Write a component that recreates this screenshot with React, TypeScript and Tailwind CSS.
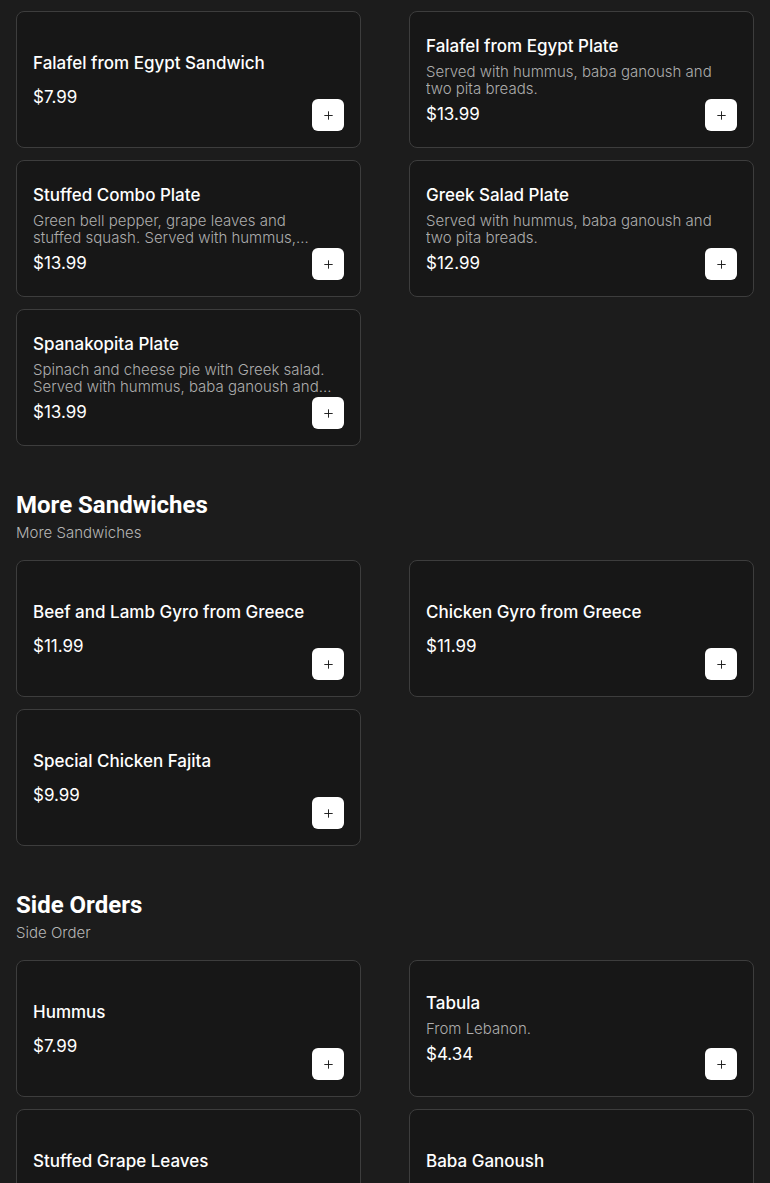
import { Plus } from 'lucide-react';

type Item = { name: string; desc?: string; price: string };

const sections: { title?: string; subtitle?: string; items: Item[] }[] = [
  {
    items: [
      { name: 'Falafel from Egypt Sandwich', price: '$7.99' },
      {
        name: 'Falafel from Egypt Plate',
        desc: 'Served with hummus, baba ganoush and two pita breads.',
        price: '$13.99',
      },
      {
        name: 'Stuffed Combo Plate',
        desc: 'Green bell pepper, grape leaves and stuffed squash. Served with hummus, baba ganoush and two pita breads.',
        price: '$13.99',
      },
      {
        name: 'Greek Salad Plate',
        desc: 'Served with hummus, baba ganoush and two pita breads.',
        price: '$12.99',
      },
      {
        name: 'Spanakopita Plate',
        desc: 'Spinach and cheese pie with Greek salad. Served with hummus, baba ganoush and two pita breads.',
        price: '$13.99',
      },
    ],
  },
  {
    title: 'More Sandwiches',
    subtitle: 'More Sandwiches',
    items: [
      { name: 'Beef and Lamb Gyro from Greece', price: '$11.99' },
      { name: 'Chicken Gyro from Greece', price: '$11.99' },
      { name: 'Special Chicken Fajita', price: '$9.99' },
    ],
  },
  {
    title: 'Side Orders',
    subtitle: 'Side Order',
    items: [
      { name: 'Hummus', price: '$7.99' },
      { name: 'Tabula', desc: 'From Lebanon.', price: '$4.34' },
      { name: 'Stuffed Grape Leaves', price: '$7.99' },
      { name: 'Baba Ganoush', price: '$7.99' },
    ],
  },
];

function MenuCard({ item }: { item: Item }) {
  return (
    <div className="relative flex h-[137px] items-center rounded-lg border border-[#3d3d3d] bg-[#171717] p-4">
      <div className="flex flex-col gap-[5px] pr-3">
        <h3 className="text-[17px] font-medium leading-6 text-white">{item.name}</h3>
        <p className="line-clamp-2 text-[15px] font-light leading-[17px] text-[#adadad]">
          {item.desc}
        </p>
        <span className="text-[17px] leading-6 text-white">{item.price}</span>
      </div>
      {/* add button */}
      <button className="absolute bottom-4 right-4 flex h-8 w-8 items-center justify-center rounded-md bg-white text-[#1a1a1a]">
        <Plus size={13} strokeWidth={1.75} />
      </button>
    </div>
  );
}

function App() {
  return (
    <div
      className="min-h-screen bg-[#1c1c1c] px-4 pt-[11px] pb-16"
      style={{ fontFamily: 'Inter, "Noto Sans", sans-serif' }}
    >
      {sections.map((section, i) => (
        <section key={i} className={i > 0 ? 'mt-[43px]' : ''}>
          {section.title && (
            <div className="mb-[17px]">
              <h2
                className="text-2xl font-bold leading-8 text-white"
                style={{ fontFamily: 'Roboto, sans-serif' }}
              >
                {section.title}
              </h2>
              <p className="mt-[2px] text-[15px] font-light leading-5 text-[#b5b5b5]">
                {section.subtitle}
              </p>
            </div>
          )}
          <div className="grid grid-cols-2 gap-x-12 gap-y-3">
            {section.items.map((item) => (
              <MenuCard key={item.name} item={item} />
            ))}
          </div>
        </section>
      ))}
    </div>
  );
}

export default App;
